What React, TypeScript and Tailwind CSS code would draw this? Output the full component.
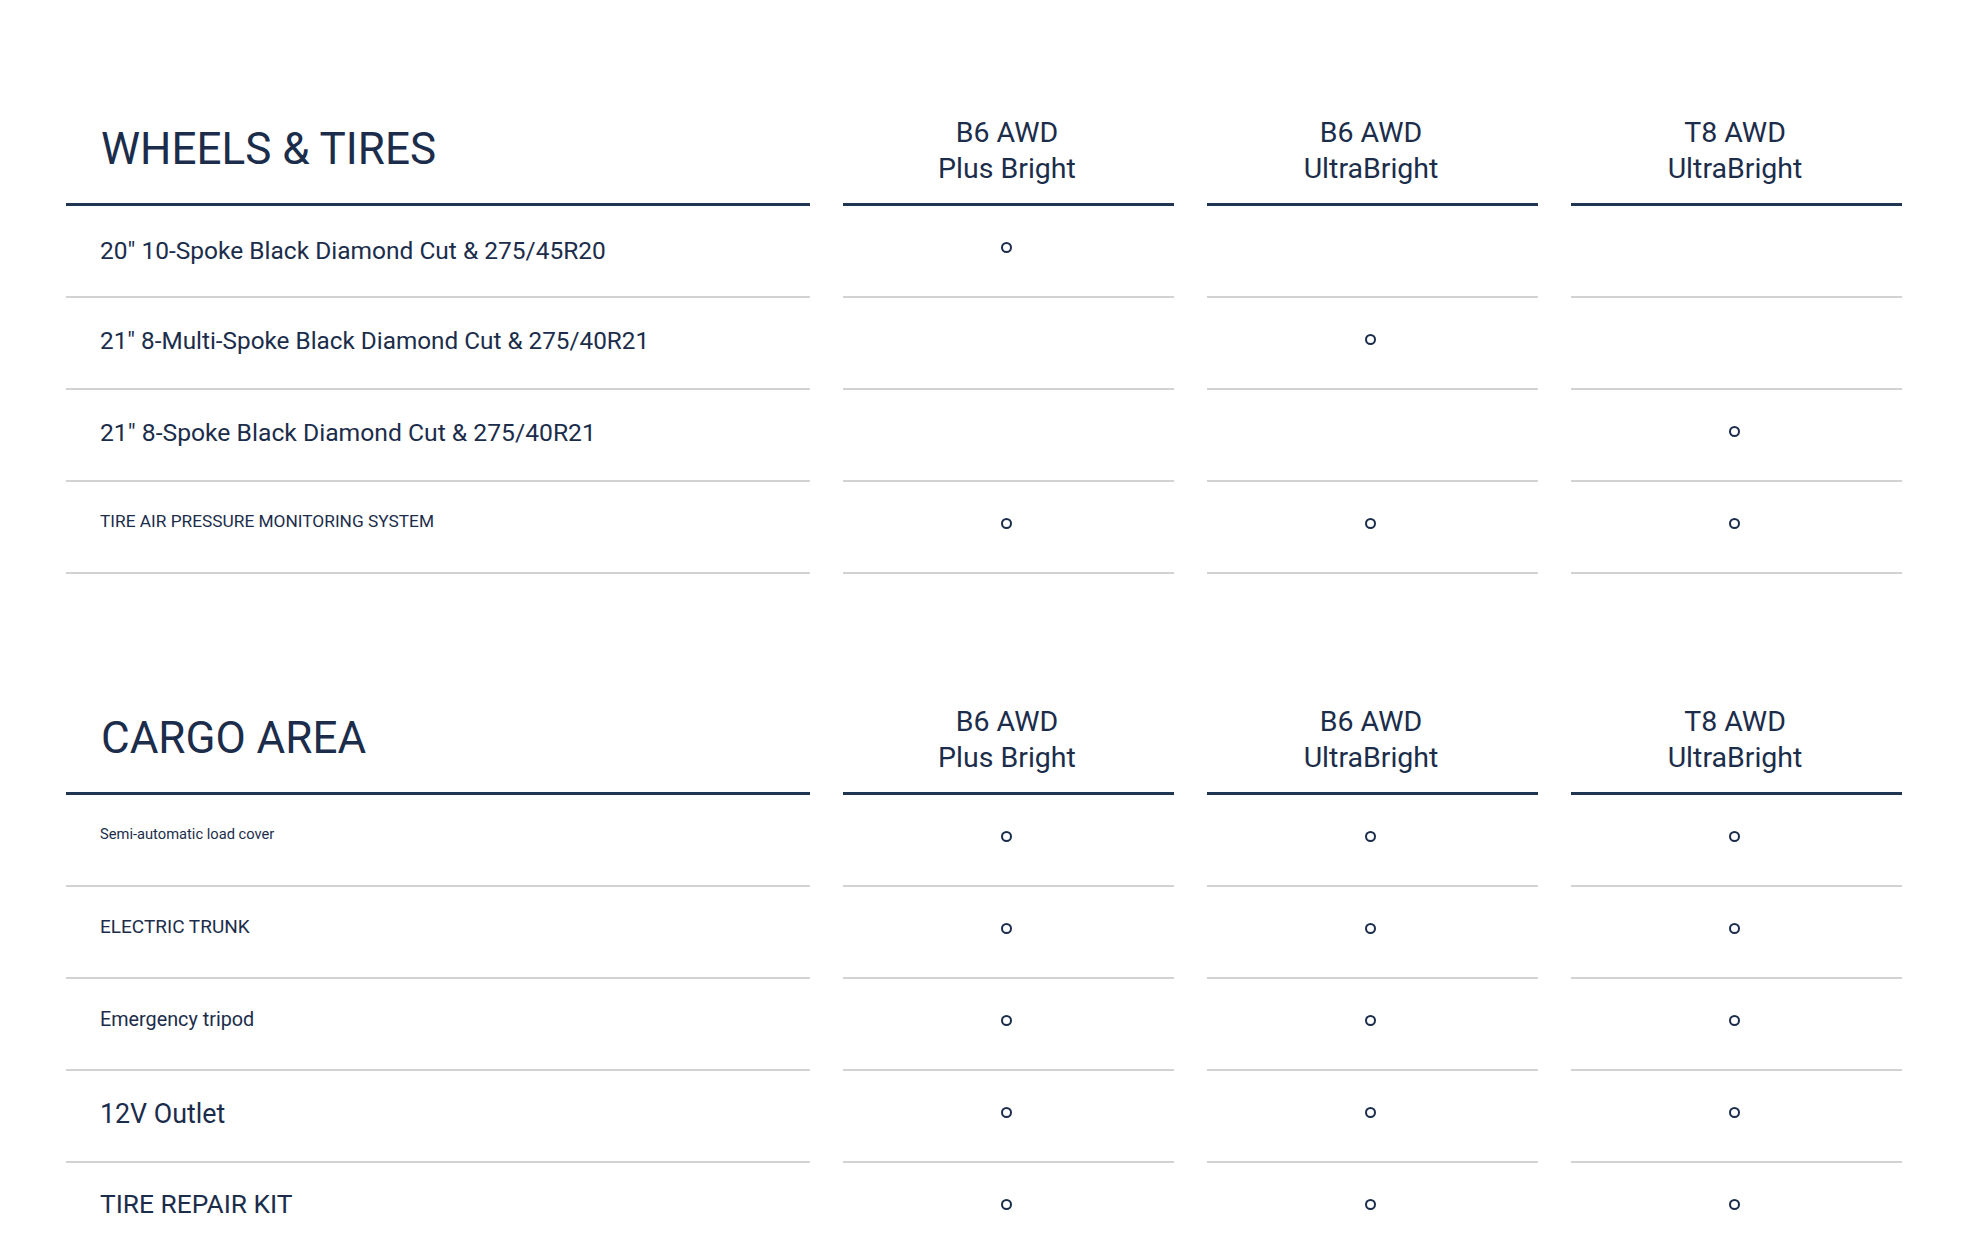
const NAVY = "text-[#1b2d4b]";

type Row = {
  label: string;
  size: string;
  pad: string;
  marks: [boolean, boolean, boolean];
};

const trims = [
  ["B6 AWD", "Plus Bright"],
  ["B6 AWD", "UltraBright"],
  ["T8 AWD", "UltraBright"],
];

const wheels: Row[] = [
  { label: '20" 10-Spoke Black Diamond Cut & 275/45R20', size: "text-[24.5px]", pad: "pb-0", marks: [true, false, false] },
  { label: '21" 8-Multi-Spoke Black Diamond Cut & 275/40R21', size: "text-[24.3px]", pad: "pb-[4px]", marks: [false, true, false] },
  { label: '21" 8-Spoke Black Diamond Cut & 275/40R21', size: "text-[24.7px]", pad: "pb-[4px]", marks: [false, false, true] },
  { label: "TIRE AIR PRESSURE MONITORING SYSTEM", size: "text-[17.3px]", pad: "pb-[10px]", marks: [true, true, true] },
];

const cargo: Row[] = [
  { label: "Semi-automatic load cover", size: "text-[14.7px]", pad: "pb-[12px]", marks: [true, true, true] },
  { label: "ELECTRIC TRUNK", size: "text-[19px]", pad: "pb-[10px]", marks: [true, true, true] },
  { label: "Emergency tripod", size: "text-[19.8px]", pad: "pb-[8px]", marks: [true, true, true] },
  { label: "12V Outlet", size: "text-[26.8px]", pad: "pb-[4px]", marks: [true, true, true] },
  { label: "TIRE REPAIR KIT", size: "text-[26.3px]", pad: "pb-[6px]", marks: [true, true, true] },
];

function Mark() {
  return <span className="block w-[11px] h-[11px] rounded-full border-2 border-[#1b2d4b]" />;
}

function Section({ title, rows, className }: { title: string; rows: Row[]; className?: string }) {
  return (
    <section className={`grid grid-cols-[744px_331px_331px_331px] gap-x-[33px] ${className ?? ""}`}>
      <div className="flex items-center border-b-[3px] border-[#1f3552] pl-[35px] pb-[21px]">
        <h2 className={`text-[44px] leading-none font-normal ${NAVY}`}>{title}</h2>
      </div>
      {trims.map(([a, b], i) => (
        <div
          key={i}
          className={`flex flex-col items-center border-b-[3px] border-[#1f3552] pb-4 pr-[3px] text-[28.5px] leading-[36px] ${NAVY}`}
        >
          <span>{a}</span>
          <span>{b}</span>
        </div>
      ))}
      {rows.map((r) => (
        <div key={r.label} className="contents">
          <div className={`flex items-center h-[92px] border-b-2 border-[#d2d2d2] pl-[34px] ${r.pad}`}>
            <span className={`${r.size} ${NAVY}`}>{r.label}</span>
          </div>
          {r.marks.map((m, i) => (
            <div
              key={i}
              className="flex items-center justify-center h-[92px] border-b-2 border-[#d2d2d2] pb-[8px] pr-[4px]"
            >
              {m && <Mark />}
            </div>
          ))}
        </div>
      ))}
    </section>
  );
}

export default function App() {
  return (
    <div className="min-h-screen bg-white font-['Roboto',sans-serif] px-[66px] pt-[115px] pb-10">
      <Section title="WHEELS & TIRES" rows={wheels} />
      <Section title="CARGO AREA" rows={cargo} className="mt-[130px]" />
    </div>
  );
}
